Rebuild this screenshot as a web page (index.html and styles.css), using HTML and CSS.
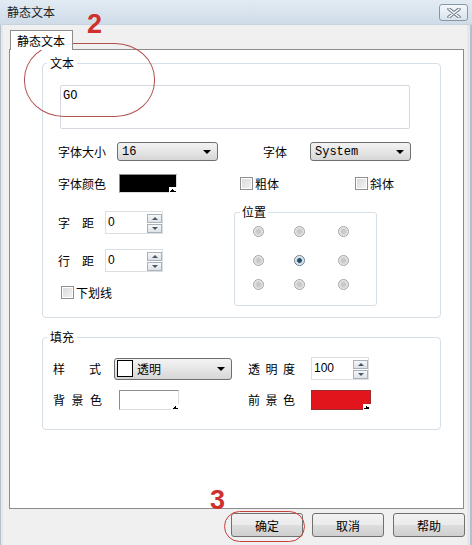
FILE: index.html
```html
<!DOCTYPE html>
<html lang="zh-CN">

<head>
    <meta charset="UTF-8">
    <meta name="viewport" content="width=device-width, initial-scale=1.0">
    <title>静态文本</title>
    <link rel="stylesheet" href="styles.css">
</head>

<body>
    <div class="window">
        <div class="titlebar">
            <span class="title">静态文本</span>
            <button class="close">
                <svg width="16" height="10" viewBox="0 0 16 10">
                    <path d="M3 1 L13 9 M13 1 L3 9" stroke="#6b7785" stroke-width="3.4" stroke-linecap="round" />
                    <path d="M3 1 L13 9 M13 1 L3 9" stroke="#fff" stroke-width="1.6" stroke-linecap="round" />
                </svg>
            </button>
        </div>

        <div class="tabs">
            <span class="tab">静态文本</span>
        </div>

        <div class="panel">
            <fieldset class="group group-text">
                <legend>文本</legend>
                <div class="textbox">GO</div>

                <div class="row row-font">
                    <span class="lbl lbl-size">字体大小</span>
                    <div class="select select-size"><span>16</span><i class="arrow"></i></div>
                    <span class="lbl lbl-face">字体</span>
                    <div class="select select-face"><span>System</span><i class="arrow"></i></div>
                </div>

                <div class="row row-color">
                    <span class="lbl lbl-color">字体颜色</span>
                    <div class="swatch swatch-black"></div>
                    <label class="check check-bold"><span class="box"></span>粗体</label>
                    <label class="check check-italic"><span class="box"></span>斜体</label>
                </div>

                <div class="split">
                    <div class="col-left">
                        <div class="row spin-row">
                            <span class="lbl lbl-spin">字　距</span>
                            <div class="spin"><span>0</span>
                                <div class="spin-btns"><i class="up"></i><i class="down"></i></div>
                            </div>
                        </div>
                        <div class="row spin-row spin-row-2">
                            <span class="lbl lbl-spin">行　距</span>
                            <div class="spin"><span>0</span>
                                <div class="spin-btns"><i class="up"></i><i class="down"></i></div>
                            </div>
                        </div>
                        <label class="check check-underline"><span class="box"></span>下划线</label>
                    </div>

                    <fieldset class="group group-pos">
                        <legend>位置</legend>
                        <div class="radios">
                            <span class="radio"></span><span class="radio"></span><span class="radio"></span>
                            <span class="radio"></span><span class="radio checked"></span><span class="radio"></span>
                            <span class="radio"></span><span class="radio"></span><span class="radio"></span>
                        </div>
                    </fieldset>
                </div>
            </fieldset>

            <fieldset class="group group-fill">
                <legend>填充</legend>
                <div class="row fill-row">
                    <span class="lbl lbl-style">样　　式</span>
                    <div class="select select-style"><span class="clear-box"></span><span>透明</span><i class="arrow"></i></div>
                    <span class="lbl lbl-alpha">透明度</span>
                    <div class="spin spin-alpha"><span>100</span>
                        <div class="spin-btns"><i class="up"></i><i class="down"></i></div>
                    </div>
                </div>
                <div class="row fill-row fill-row-2">
                    <span class="lbl lbl-bg">背景色</span>
                    <div class="swatch swatch-white"></div>
                    <span class="lbl lbl-fg">前景色</span>
                    <div class="swatch swatch-red"></div>
                </div>
            </fieldset>
        </div>

        <div class="buttons">
            <button class="btn">确定</button>
            <button class="btn">取消</button>
            <button class="btn">帮助</button>
        </div>

        <!-- hand-drawn notes over the dialog -->
        <span class="note note-2">2</span>
        <span class="ring ring-text"></span>
        <span class="note note-3">3</span>
        <span class="ring ring-ok"></span>
    </div>
</body>

</html>
```

FILE: styles.css
```css
* {
    box-sizing: border-box;
}

body {
    margin: 0;
    font-family: "Noto Sans CJK SC", "Liberation Sans", sans-serif;
    font-size: 12px;
    line-height: 1;
    color: #000;
}

.window {
    position: relative;
    width: 472px;
    height: 545px;
    overflow: hidden;
    background-color: #f0f0f0;
    box-shadow: inset 1px 0 #b7c0c9, inset 3px 0 #e4e8ec, inset -2px 0 #b7c0c9, inset -5px 0 #e4e8ec;
}

/* title bar */

.titlebar {
    display: flex;
    justify-content: space-between;
    align-items: center;
    height: 25px;
    padding: 0 4px 0 7px;
    background-image: linear-gradient(#e2ebf3, #cfdce8);
    border-bottom: 1px solid #c7d3de;
}

.title {
    color: #1e1e1e;
}

.close {
    display: flex;
    justify-content: center;
    align-items: center;
    width: 29px;
    height: 17px;
    padding: 0;
    margin-top: 1px;
    border: 1px solid #8796a6;
    border-radius: 3px;
    background-image: linear-gradient(#f4f7fa, #d9e2eb);
}

/* tab */

.tabs {
    display: flex;
    margin-top: 5px;
    padding-left: 10px;
}

.tab {
    position: relative;
    z-index: 1;
    width: 63px;
    height: 20px;
    margin-bottom: -1px;
    padding: 4px 0 0 6px;
    background-color: #fff;
    border: 1px solid #8c8c8c;
    border-bottom: none;
}

.panel {
    width: 455px;
    height: 460px;
    margin-left: 9px;
    background-color: #fff;
    border: 1px solid #8c8c8c;
}

/* group boxes */

.group {
    margin: 0;
    padding: 0;
    border: 1px solid #d6dfe6;
    border-radius: 4px;
}

.group legend {
    margin-left: 4px;
    padding: 0 3px;
    line-height: 14px;
}

.group-text {
    width: 399px;
    height: 262px;
    margin: 6px 0 0 32px;
    padding-top: 15px;
}

.group-fill {
    width: 399px;
    height: 100px;
    margin: 12px 0 0 32px;
    padding-top: 13px;
}

.textbox {
    width: 350px;
    height: 44px;
    margin-left: 17px;
    padding: 4px 0 0 2px;
    font-family: "Liberation Mono", monospace;
    font-size: 12px;
    border: 1px solid #d3d9df;
    border-radius: 2px;
}

.row {
    display: flex;
    align-items: center;
}

.lbl {
    flex: none;
}

.row-font {
    margin: 13px 0 0 15px;
}

.lbl-size {
    width: 59px;
}

.lbl-face {
    width: 47px;
    margin-left: 45px;
}

.select {
    position: relative;
    display: flex;
    align-items: center;
    height: 19px;
    padding-left: 4px;
    font-family: "Liberation Mono", monospace;
    border: 1px solid #6f6f6f;
    border-radius: 3px;
    background-image: linear-gradient(#f3f3f3, #e6e6e6 50%, #d6d6d6);
}

.select-size,
.select-face {
    width: 101px;
}

.arrow {
    position: absolute;
    right: 6px;
    top: 7px;
    border-left: 4px solid transparent;
    border-right: 4px solid transparent;
    border-top: 4px solid #000;
}

.row-color {
    margin: 13px 0 0 15px;
}

.lbl-color {
    width: 61px;
}

.swatch {
    position: relative;
    flex: none;
    width: 58px;
    height: 19px;
    border: 1px solid #8d8d8d;
    border-right-color: #dcdcdc;
    border-bottom-color: #dcdcdc;
}

.swatch::after {
    content: "";
    position: absolute;
    right: -1px;
    bottom: -1px;
    width: 8px;
    height: 6px;
    background-color: #fff;
    background-image: linear-gradient(135deg, transparent 50%, #000 50%), linear-gradient(225deg, transparent 50%, #000 50%);
    background-size: 3px 3px;
    background-position: 1px 2px, 4px 2px;
    background-repeat: no-repeat;
}

.swatch-black {
    background-color: #000;
}

.swatch-white {
    width: 60px;
    height: 20px;
    margin-top: 1px;
    background-color: #fff;
}

.swatch-red {
    width: 60px;
    height: 20px;
    background-color: #e2151d;
    border-color: #9c2d2d;
}

.check {
    display: flex;
    align-items: center;
    gap: 2px;
}

.box {
    width: 13px;
    height: 13px;
    border: 1px solid #8e8f8f;
    background-image: linear-gradient(135deg, #d8d8d8, #f4f4f4);
    box-shadow: inset 0 0 0 1px #fff;
}

.check-bold {
    margin-left: 63px;
}

.check-italic {
    margin-left: 76px;
}

/* spacing + position */

.split {
    display: flex;
    align-items: flex-start;
}

.col-left {
    width: 191px;
    flex: none;
}

.spin-row {
    margin: 18px 0 0 15px;
}

.spin-row-2 {
    margin-top: 15px;
}

.lbl-spin {
    width: 47px;
}

.spin {
    position: relative;
    width: 58px;
    height: 23px;
    padding: 4px 0 0 2px;
    font-family: "Liberation Sans", sans-serif;
    font-size: 12px;
    border: 1px solid #dadfe4;
}

.spin-btns {
    position: absolute;
    right: 0;
    top: 2px;
    display: flex;
    flex-direction: column;
    gap: 1px;
}

.spin-btns i {
    display: flex;
    justify-content: center;
    align-items: center;
    width: 15px;
    height: 9px;
    border: 1px solid #a9b2bb;
    background-image: linear-gradient(#f6f7f8, #dde2e7);
}

.spin-btns .up::before {
    content: "";
    border-left: 3px solid transparent;
    border-right: 3px solid transparent;
    border-bottom: 3px solid #4a5766;
}

.spin-btns .down::before {
    content: "";
    border-left: 3px solid transparent;
    border-right: 3px solid transparent;
    border-top: 3px solid #4a5766;
}

.check-underline {
    margin: 14px 0 0 18px;
}

.group-pos {
    width: 143px;
    height: 101px;
    margin-top: 12px;
    padding-top: 7px;
    border-radius: 3px;
}

.group-pos legend {
    margin-left: 5px;
    padding: 0 2px;
}

.radios {
    display: grid;
    grid-template-columns: 41px 44px 11px;
    grid-template-rows: 29px 24px 11px;
    margin-left: 18px;
}

.radio {
    width: 11px;
    height: 11px;
    border: 1px solid #a3a3a3;
    border-radius: 50%;
    background-image: radial-gradient(#c9c9c9 30%, #ececec 70%);
}

.radio.checked {
    border-color: #6b7c8c;
    background-image: radial-gradient(#1b4f6b 30%, #c9d6e0 45%, #eef2f5 70%);
}

/* fill */

.fill-row {
    margin-left: 10px;
}

.lbl-style {
    width: 61px;
}

.select-style {
    width: 118px;
    height: 22px;
    padding-left: 2px;
    gap: 4px;
    font-family: "Noto Sans CJK SC", sans-serif;
}

.select-style .arrow {
    top: 8px;
}

.clear-box {
    width: 16px;
    height: 17px;
    border: 1px solid #000;
    background-color: #fff;
}

.lbl-alpha,
.lbl-fg {
    width: 63px;
    letter-spacing: 5.5px;
}

.lbl-alpha {
    margin-left: 16px;
}

.spin-alpha {
    height: 23px;
}

.fill-row-2 {
    margin-top: 9px;
}

.lbl-bg {
    width: 66px;
    letter-spacing: 6.5px;
}

.lbl-fg {
    margin-left: 69px;
}

/* buttons */

.buttons {
    display: flex;
    justify-content: flex-end;
    gap: 9px;
    margin-top: 4px;
    padding-right: 7px;
}

.btn {
    width: 72px;
    height: 24px;
    padding: 0;
    font-family: inherit;
    font-size: 12px;
    border: 1px solid #707070;
    border-radius: 3px;
    background-image: linear-gradient(#f2f2f2, #ebebeb 50%, #dddddd 51%, #cfcfcf);
}

/* annotations */

.note {
    position: absolute;
    font-family: "Liberation Sans", sans-serif;
    font-weight: bold;
    font-size: 27px;
    line-height: 1;
    color: #d0302c;
}

.note-2 {
    left: 87px;
    top: 11px;
}

.note-3 {
    left: 210px;
    top: 487px;
}

.ring {
    position: absolute;
    border: 1.5px solid #b3504e;
}

.ring-text {
    left: 24px;
    top: 43px;
    width: 131px;
    height: 74px;
    border-radius: 40px / 36px;
}

.ring-ok {
    left: 224px;
    top: 511px;
    width: 81px;
    height: 31px;
    border-radius: 16px;
    border-color: #c8403a;
}
```
